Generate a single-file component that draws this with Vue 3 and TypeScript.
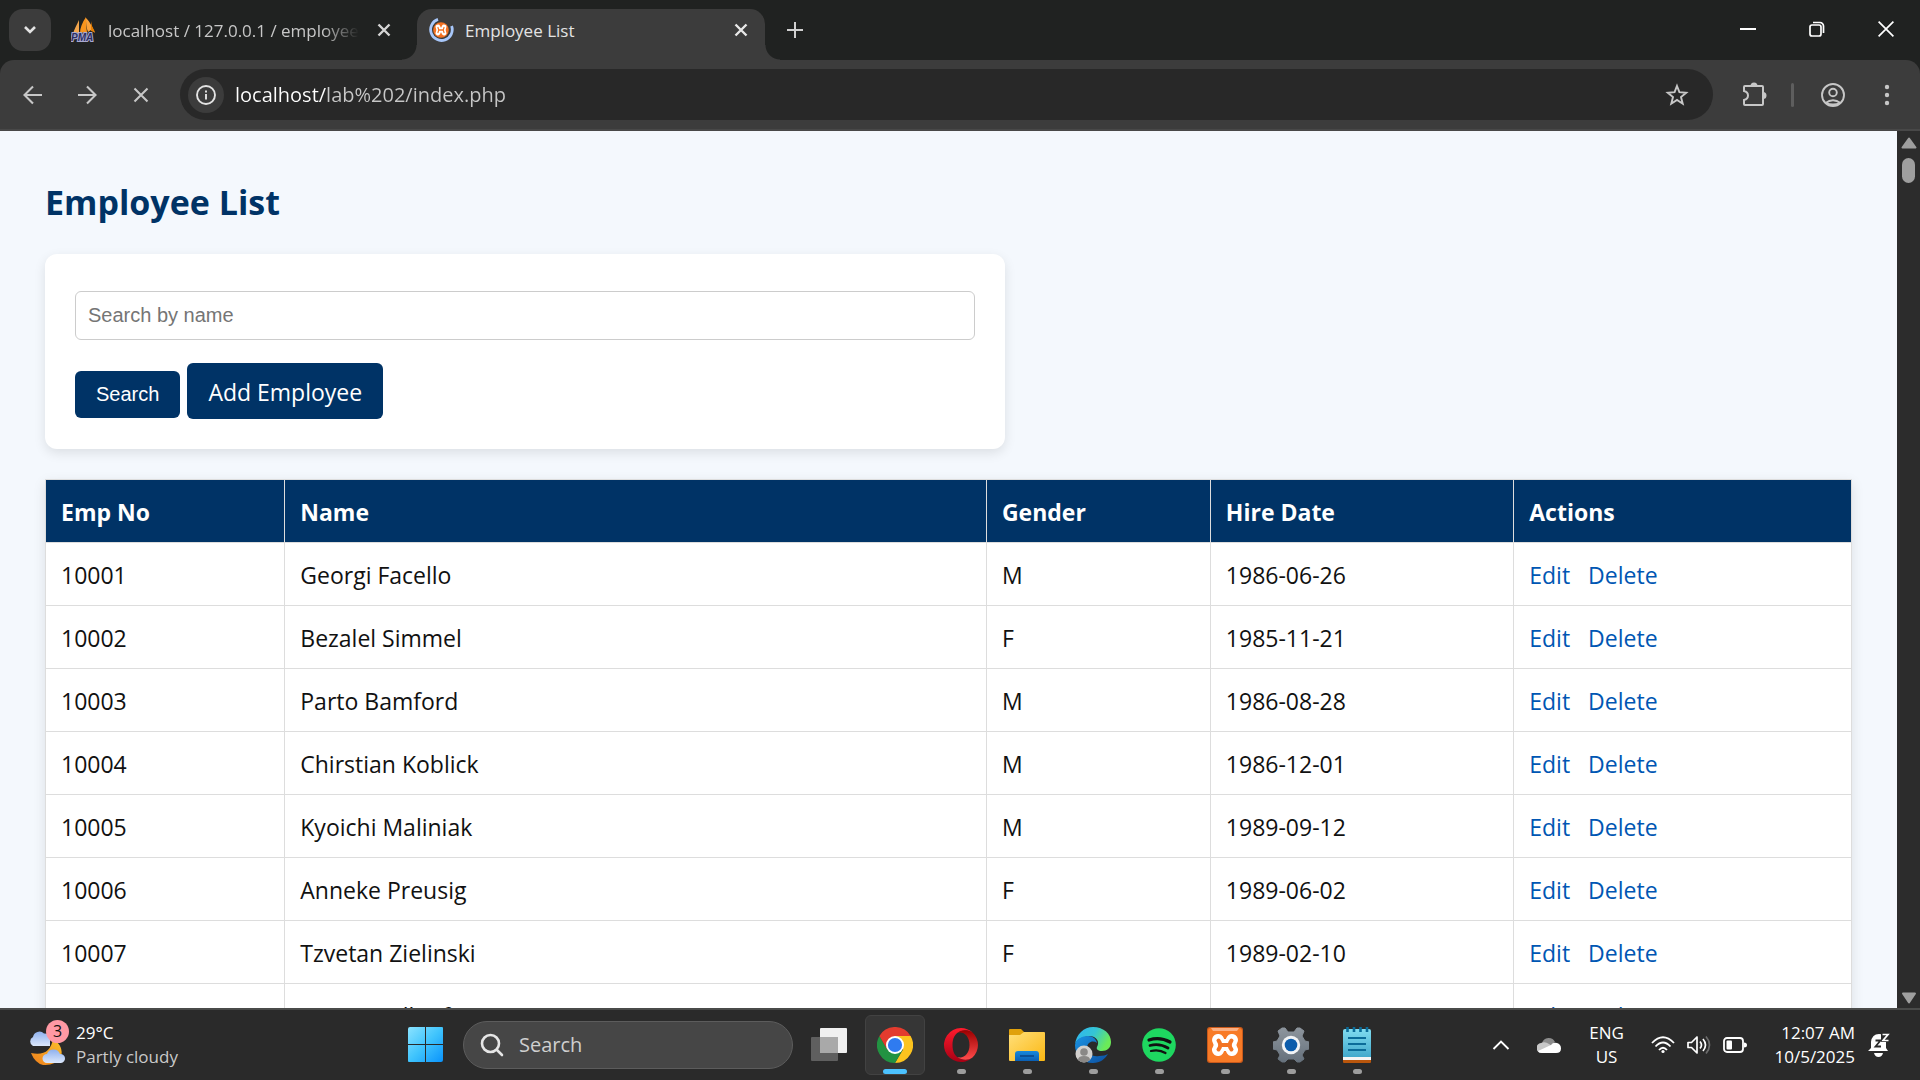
<script setup lang="ts">
import { ref } from 'vue'

interface Employee {
  no: number
  name: string
  gender: 'M' | 'F'
  hired: string
}

const employees: Employee[] = [
  { no: 10001, name: 'Georgi Facello', gender: 'M', hired: '1986-06-26' },
  { no: 10002, name: 'Bezalel Simmel', gender: 'F', hired: '1985-11-21' },
  { no: 10003, name: 'Parto Bamford', gender: 'M', hired: '1986-08-28' },
  { no: 10004, name: 'Chirstian Koblick', gender: 'M', hired: '1986-12-01' },
  { no: 10005, name: 'Kyoichi Maliniak', gender: 'M', hired: '1989-09-12' },
  { no: 10006, name: 'Anneke Preusig', gender: 'F', hired: '1989-06-02' },
  { no: 10007, name: 'Tzvetan Zielinski', gender: 'F', hired: '1989-02-10' },
  { no: 10008, name: 'Saniya Kalloufi', gender: 'M', hired: '1994-09-15' },
]

const columns = ['Emp No', 'Name', 'Gender', 'Hire Date', 'Actions']
const query = ref('')
const address = ref('localhost/lab%202/index.php')
</script>

<template>
  <div class="screen">
    <header class="tabstrip">
      <button class="tab-search" aria-label="Search tabs">
        <svg width="14" height="10" viewBox="0 0 14 10"><path d="M2 2l5 5 5-5" fill="none" stroke="#e3e3e3" stroke-width="2.6" /></svg>
      </button>
      <div class="tab">
        <svg class="favicon" width="26" height="26" viewBox="0 0 26 26">
          <path d="M8 3C6 8 3 12 2 17l6-1z" fill="#f3a64c" />
          <path d="M15 0c-4 6-6 11-6 16l7-1c-1-5-1-10-1-15z" fill="#f7941d" />
          <path d="M15 1c4 4 6 8 9 15l-4-3-3 2c-2-5-2-9-2-14z" fill="#f9a13a" />
          <path d="M20 4l1 5 3 6-4-1z" fill="#e67e00" />
          <text x="0" y="24" font-family="Liberation Sans, sans-serif" font-size="10" font-weight="700" font-style="italic" fill="#2b2d63" stroke="#a9a9cf" stroke-width="2" paint-order="stroke">PMA</text>
        </svg>
        <span class="tab-title fading">localhost / 127.0.0.1 / employee</span>
        <button class="tab-close" aria-label="Close tab">
          <svg width="14" height="14" viewBox="0 0 14 14"><path d="M1.500 1.500l11 11M12.500 1.500l-11 11" stroke="#d5d5d5" stroke-width="2.400" /></svg>
        </button>
      </div>
      <div class="tab active">
        <svg class="favicon" width="26" height="26" viewBox="0 0 26 26">
          <path d="M10 2.400A10.800 10.800 0 1 0 23.600 9" fill="none" stroke="#a8c7fa" stroke-width="2.800" />
          <circle cx="13" cy="13" r="7.800" fill="#f37021" />
          <path d="M10 10Q11.500 13 10 16M16 10Q14.500 13 16 16M11 13H15" fill="none" stroke="#fff" stroke-width="4.800" stroke-linecap="round" />
          <path d="M10 10.500Q11.500 13 10 15.500M16 10.500Q14.500 13 16 15.500M11 13H15" fill="none" stroke="#f37021" stroke-width="1.300" stroke-linecap="round" />
        </svg>
        <span class="tab-title">Employee List</span>
        <button class="tab-close" aria-label="Close tab">
          <svg width="14" height="14" viewBox="0 0 14 14"><path d="M1.500 1.500l11 11M12.500 1.500l-11 11" stroke="#e8e8e8" stroke-width="2.400" /></svg>
        </button>
      </div>
      <button class="new-tab" aria-label="New tab">
        <svg width="16" height="16" viewBox="0 0 16 16"><path d="M8 0v16M0 8h16" stroke="#d0d0d0" stroke-width="2" /></svg>
      </button>
      <div class="window-controls">
        <button aria-label="Minimize"><svg width="16" height="16" viewBox="0 0 16 16"><path d="M0 8h16" stroke="#fff" stroke-width="2" /></svg></button>
        <button aria-label="Restore">
          <svg width="16" height="16" viewBox="0 0 16 16" fill="none" stroke="#fff" stroke-width="1.700"><rect x="1" y="4" width="11" height="11" rx="2" /><path d="M4 1.500h7a3.500 3.500 0 0 1 3.500 3.500v7" /></svg>
        </button>
        <button aria-label="Close"><svg width="16" height="16" viewBox="0 0 16 16"><path d="M.6.600l14.800 14.800M15.400.600L.6 15.400" stroke="#fff" stroke-width="1.700" /></svg></button>
      </div>
    </header>

    <div class="toolbar-back">
      <nav class="toolbar">
        <button class="nav-btn" aria-label="Back"><svg width="20" height="20" viewBox="0 0 20 20"><path d="M19 10H2.500M10 1.500L1.500 10l8.500 8.500" fill="none" stroke="#c7c7c7" stroke-width="2.100" /></svg></button>
        <button class="nav-btn" aria-label="Forward"><svg width="20" height="20" viewBox="0 0 20 20"><path d="M1 10h16.500M10 1.500l8.500 8.500-8.500 8.500" fill="none" stroke="#c7c7c7" stroke-width="2.100" /></svg></button>
        <button class="nav-btn" aria-label="Stop"><svg width="20" height="20" viewBox="0 0 20 20"><path d="M3.500 3.500l13 13M16.500 3.500l-13 13" stroke="#c7c7c7" stroke-width="2.100" /></svg></button>
        <div class="omnibox">
          <button class="site-info" aria-label="Site information">
            <svg width="20" height="20" viewBox="0 0 20 20"><circle cx="10" cy="10" r="9" fill="none" stroke="#e3e3e3" stroke-width="1.900" /><path d="M10 9v5.500M10 5.500v2" stroke="#e3e3e3" stroke-width="1.900" /></svg>
          </button>
          <input v-model="address" class="address" type="text" aria-label="Address" />
          <button class="star" aria-label="Bookmark this tab">
            <svg width="24" height="24" viewBox="0 0 24 24"><path d="M12 3l2.400 6.200 6.800.500-5.200 4.300 1.700 6.700L12 17l-5.700 3.700L8 14 2.800 9.700l6.800-.5z" fill="none" stroke="#c7c7c7" stroke-width="1.900" /></svg>
          </button>
        </div>
        <button class="extensions" aria-label="Extensions">
          <svg width="26" height="26" viewBox="0 0 26 26"><path d="M4 4h17q1 0 1 1v17q0 1-1 1H4q-1 0-1-1v-4q4-1 4-4.500T3 9V5q0-1 1-1z" fill="none" stroke="#c7c7c7" stroke-width="2" /><path d="M9.500 4a3.500 3.500 0 0 1 7 0zM22 10a3.500 3.500 0 0 1 0 7z" fill="#c7c7c7" /></svg>
        </button>
        <span class="divider"></span>
        <button class="profile" aria-label="Profile">
          <svg width="24" height="24" viewBox="0 0 24 24" fill="none" stroke="#c7c7c7" stroke-width="1.900"><circle cx="12" cy="12" r="11" /><circle cx="12" cy="9.500" r="3.800" /><path d="M4.500 20q7.500-5.500 15 0" /><path d="M5 20q7 3 14 0" /></svg>
        </button>
        <button class="menu" aria-label="Menu">
          <svg width="6" height="22" viewBox="0 0 6 22" fill="#c7c7c7"><circle cx="3" cy="3" r="2.200" /><circle cx="3" cy="11" r="2.200" /><circle cx="3" cy="19" r="2.200" /></svg>
        </button>
      </nav>
    </div>

    <div class="viewport">
      <main class="page">
        <h1>Employee List</h1>
        <form class="search-card" @submit.prevent>
          <input v-model="query" type="text" placeholder="Search by name" aria-label="Search by name" />
          <div class="form-actions">
            <button type="submit" class="search-btn">Search</button>
            <a href="#" class="add-btn">Add Employee</a>
          </div>
        </form>
        <table>
          <colgroup><col class="c-no" /><col class="c-name" /><col class="c-gender" /><col class="c-date" /><col class="c-actions" /></colgroup>
          <thead>
            <tr><th v-for="c in columns" :key="c" scope="col">{{ c }}</th></tr>
          </thead>
          <tbody>
            <tr v-for="e in employees" :key="e.no">
              <td>{{ e.no }}</td>
              <td>{{ e.name }}</td>
              <td>{{ e.gender }}</td>
              <td>{{ e.hired }}</td>
              <td><a href="#">Edit</a><a href="#">Delete</a></td>
            </tr>
          </tbody>
        </table>
      </main>
      <div class="scrollbar">
        <svg width="16" height="12" viewBox="0 0 16 12"><path d="M8 1.500L14.500 10.500h-13z" fill="#9f9f9f" stroke="#9f9f9f" stroke-width="2" stroke-linejoin="round" /></svg>
        <span class="thumb"></span>
        <svg class="down" width="16" height="12" viewBox="0 0 16 12"><path d="M8 10.500L14 1.500H2z" fill="#9f9f9f" stroke="#9f9f9f" stroke-width="2" stroke-linejoin="round" /></svg>
      </div>
    </div>

    <footer class="taskbar">
      <button class="weather">
        <span class="weather-icon">
          <svg width="38" height="42" viewBox="0 0 38 42">
            <defs>
              <linearGradient id="cloud" x1="0" y1="0" x2="0" y2="1"><stop offset="0" stop-color="#8fb1ee" /><stop offset="1" stop-color="#dce8fc" /></linearGradient>
              <linearGradient id="moon" x1="1" y1="0" x2="0" y2="1"><stop offset="0" stop-color="#fcc12c" /><stop offset="1" stop-color="#ee7e1c" /></linearGradient>
            </defs>
            <path d="M25 15Q36 22 33 33Q27 42 15 41Q7 39 3 29Q22 33 25 15z" fill="url(#moon)" />
            <path d="M5 22a5 5 0 0 1 0-9 6.500 6.500 0 0 1 11-3.500A6 6 0 0 1 22 13v9z" fill="url(#cloud)" />
            <path d="M19 39a4.500 4.500 0 0 1 0-9 7 7 0 0 1 13 0 4.500 4.500 0 0 1 1 9z" fill="url(#cloud)" />
          </svg>
          <span class="badge">3</span>
        </span>
        <span class="weather-text"><span class="temp">29°C</span><span class="cond">Partly cloudy</span></span>
      </button>

      <div class="apps">
        <button class="start" aria-label="Start">
          <svg width="36" height="36" viewBox="0 0 36 36">
            <defs><linearGradient id="win" x1="0" y1="0" x2="1" y2="1"><stop offset="0" stop-color="#8be3ff" /><stop offset=".5" stop-color="#40c4fd" /><stop offset="1" stop-color="#0a93fb" /></linearGradient></defs>
            <path d="M2 0h15v17H0V2q0-2 2-2zM18 0h16q1 0 1 1v16H18zM0 18h17v17H1q-1 0-1-1zM18 18h17v15q0 2-2 2H18z" fill="url(#win)" />
          </svg>
        </button>
        <label class="task-search">
          <svg width="24" height="24" viewBox="0 0 24 24" fill="none" stroke="#e6e6e6" stroke-width="2.600" stroke-linecap="round"><circle cx="10.500" cy="10.500" r="8.500" /><path d="M17 17l5 5" /></svg>
          <input type="text" placeholder="Search" aria-label="Search Windows" />
        </label>
        <button class="task-view" aria-label="Task view">
          <svg width="36" height="36" viewBox="0 0 36 36">
            <rect x="9" y="1" width="27" height="25" rx="1" fill="#f0f0f0" /><rect y="10" width="27" height="24" rx="1" fill="#5f5f5f" /><path d="M9 10h18v16H9z" fill="#a9a9a9" />
          </svg>
        </button>
        <button class="app current" aria-label="Chrome">
          <svg width="36" height="36" viewBox="0 0 36 36">
            <path d="M18 18L2.400 9A18 18 0 0 1 33.600 9z" fill="#e33b2e" />
            <path d="M18 9h15.600A18 18 0 0 1 18 36l8-13.500z" fill="#fcc31e" />
            <path d="M2.400 9A18 18 0 0 0 18 36l7.800-13.500L10.200 22.500z" fill="#229342" />
            <path d="M2.400 9h31.200H18L10.200 22.500z" fill="#e33b2e" />
            <circle cx="18" cy="18" r="9" fill="#fff" /><circle cx="18" cy="18" r="7.100" fill="#2f7bf0" />
          </svg>
          <span class="indicator"></span>
        </button>
        <button class="app" aria-label="Opera">
          <svg width="36" height="36" viewBox="0 0 36 36">
            <defs>
              <linearGradient id="opA" x1="0" y1="0" x2="0" y2="1"><stop offset="0" stop-color="#ff1b2d" /><stop offset="1" stop-color="#a70014" /></linearGradient>
              <linearGradient id="opB" x1="0" y1="0" x2="0" y2="1"><stop offset="0" stop-color="#9c0000" /><stop offset="1" stop-color="#ff4b4b" /></linearGradient>
            </defs>
            <path d="M18 1a17 17 0 1 0 11.500 29.500C26 33 21 33 18 32c-6-2-8.500-7-8.500-14S12 6 18 4c3-1 8-1 11.500 1.500A17 17 0 0 0 18 1z" fill="url(#opA)" />
            <path d="M29.500 5.500C24 2 18 3 14.500 6c6-2 12 3 12 12s-6 14-12 12c4 3 10 4 15 .500A17 17 0 0 0 29.500 5.500z" fill="url(#opB)" />
          </svg>
          <span class="indicator"></span>
        </button>
        <button class="app" aria-label="File Explorer">
          <svg width="36" height="36" viewBox="0 0 36 36">
            <defs>
              <linearGradient id="fold" x1="0" y1="0" x2="1" y2="1"><stop offset="0" stop-color="#ffdf7a" /><stop offset="1" stop-color="#fbb813" /></linearGradient>
              <linearGradient id="foldB" x1="0" y1="0" x2="0" y2="1"><stop offset="0" stop-color="#1789dc" /><stop offset="1" stop-color="#0a5fb4" /></linearGradient>
            </defs>
            <path d="M0 3q0-1 1-1h11l4 4v6H0z" fill="#e0a10c" /><path d="M0 8h11l4-3h20q1 0 1 1v27q0 1-1 1H1q-1 0-1-1z" fill="url(#fold)" />
            <path d="M6 34V27q0-3 3-3h18q3 0 3 3v7z" fill="url(#foldB)" /><path d="M11 29h14" stroke="#0b4f94" stroke-width="2" />
          </svg>
          <span class="indicator"></span>
        </button>
        <button class="app" aria-label="Edge">
          <svg width="36" height="36" viewBox="0 0 36 36">
            <defs>
              <linearGradient id="edA" x1="0" y1="0" x2="1" y2=".4"><stop offset="0" stop-color="#2eb4f4" /><stop offset=".55" stop-color="#35c5d4" /><stop offset="1" stop-color="#6bea58" /></linearGradient>
              <linearGradient id="edB" x1="0" y1="0" x2="1" y2="1"><stop offset="0" stop-color="#1a93e4" /><stop offset="1" stop-color="#0c4fa0" /></linearGradient>
            </defs>
            <path d="M0 18C1 7 9 0 18 0c11 0 18 7 18 15 0 6-4 9-9 9-4 0-6-2-5-4 3-5 0-11-8-11C6 10 1 13 0 18z" fill="url(#edA)" />
            <path d="M0 18C1 12 7 9 13 9c5 0 8 3 9 7-4-3-10-1-10 5 0 6 6 9 12 8 4 0 7-1 9-2-3 5-8 9-15 9C7 36 0 28 0 18z" fill="url(#edB)" />
            <circle cx="9" cy="27" r="8.500" fill="#d2d0ce" /><circle cx="9" cy="25" r="3.800" fill="#8a8886" /><path d="M3 33q0-4 6-4t6 4q-6 5-12 0z" fill="#8a8886" />
          </svg>
          <span class="indicator"></span>
        </button>
        <button class="app" aria-label="Spotify">
          <svg width="36" height="36" viewBox="0 0 36 36"><circle cx="18" cy="18" r="16.800" fill="#1ed760" /><path d="M8 13q11-3.500 21 2" fill="none" stroke="#111" stroke-width="3.200" stroke-linecap="round" /><path d="M9 18.500q9.500-2.500 18 2.500" fill="none" stroke="#111" stroke-width="2.800" stroke-linecap="round" /><path d="M10 24q8-2 14.500 2" fill="none" stroke="#111" stroke-width="2.200" stroke-linecap="round" /></svg>
          <span class="indicator"></span>
        </button>
        <button class="app" aria-label="XAMPP">
          <svg width="36" height="36" viewBox="0 0 36 36">
            <rect width="36" height="36" rx="3" fill="#c9591b" /><rect x="1" y="1" width="34" height="34" rx="3" fill="#f87b27" /><path d="M4 1h28l-2 3H6z" fill="#fbb083" />
            <path d="M11 13Q14.500 18 11 23M25 13Q21.500 18 25 23M13 18H23" fill="none" stroke="#fff" stroke-width="12" stroke-linecap="round" />
            <path d="M11.500 13.500Q15 18 11.500 22.500M24.500 13.500Q21 18 24.500 22.500M14 18H22" fill="none" stroke="#f37424" stroke-width="4" stroke-linecap="round" />
            <path d="M18 5v7M18 24v7" stroke="#f87b27" stroke-width="2" />
          </svg>
          <span class="indicator"></span>
        </button>
        <button class="app" aria-label="Settings">
          <svg width="36" height="36" viewBox="0 0 36 36">
            <defs><linearGradient id="gear" x1="0" y1="0" x2="0" y2="1"><stop offset="0" stop-color="#8d959d" /><stop offset="1" stop-color="#66717c" /></linearGradient></defs>
            <path d="M9 1h3l3 4h6l3-4h3l4 3-2 5 3 5 4 1v7l-4 1-3 5 2 4-4 3h-3l-3-3h-6l-3 3H9l-4-3 2-4-3-5-4-1v-7l4-1 3-5-2-5z" fill="url(#gear)" stroke="url(#gear)" stroke-linejoin="round" />
            <circle cx="18" cy="18" r="9.200" fill="#f1f3f5" /><circle cx="18" cy="18" r="6.300" fill="#0c5cab" />
          </svg>
          <span class="indicator"></span>
        </button>
        <button class="app" aria-label="Notepad">
          <svg width="36" height="36" viewBox="0 0 36 36">
            <defs><linearGradient id="note" x1="0" y1="0" x2="0" y2="1"><stop offset="0" stop-color="#80dcf0" /><stop offset="1" stop-color="#42a9cc" /></linearGradient></defs>
            <path d="M4 31h28v4q0 1-1 1H5q-1 0-1-1z" fill="#b9560c" /><path d="M4 28h28v5H4z" fill="#f4f4f4" /><path d="M4 4q0-2 2-2h24q2 0 2 2v26H4z" fill="url(#note)" />
            <path d="M9 11h18M9 17h18M9 23h18" stroke="#0b6c99" stroke-width="2" /><path d="M8.500 0v5M15 0v5M21.500 0v5M28 0v5" stroke="#0b6c99" stroke-width="2.600" />
          </svg>
          <span class="indicator"></span>
        </button>
      </div>

      <div class="tray">
        <button class="tray-btn caret" aria-label="Show hidden icons"><svg width="18" height="12" viewBox="0 0 18 12"><path d="M1.500 10L9 2.500l7.500 7.500" fill="none" stroke="#fff" stroke-width="1.900" /></svg></button>
        <button class="tray-btn onedrive" aria-label="OneDrive"><svg width="24" height="16" viewBox="0 0 24 16"><path d="M5 6a7 7 0 0 1 13-1l-6 6z" fill="#8d8d8d" /><path d="M5 16a5 5 0 0 1-1-10q4-2 8 1l6 4-7 5z" fill="#c8c8c8" /><path d="M5 16q-3 0-4-2l13-6q2-3 6-2 4 1 4 5.500T19 16z" fill="#fff" /></svg></button>
        <button class="lang"><span>ENG</span><span>US</span></button>
        <button class="status" aria-label="Network, volume and battery">
          <svg width="24" height="18" viewBox="0 0 24 18" fill="none" stroke="#fff" stroke-width="1.800"><path d="M1 7q11-11.500 22 0M4.500 10.500q7.500-8 15 0M8 14q4-4.500 8 0" /><circle cx="12" cy="15.500" r="1.600" fill="#fff" stroke="none" /></svg>
          <svg width="24" height="20" viewBox="0 0 24 20" fill="none" stroke="#fff" stroke-width="1.700"><path d="M1 7.500h3.500L10 2v16l-5.500-5.500H1z" stroke-linejoin="round" /><path d="M13 6.500q3 3.500 0 7M16 4q5 6 0 12" /><path d="M19 1.500q7 8.500 0 17" stroke="#6c6c6c" /></svg>
          <svg width="24" height="16" viewBox="0 0 24 16"><rect x="1" y="1" width="19" height="14" rx="3" fill="none" stroke="#fff" stroke-width="1.800" /><rect x="3.500" y="3.500" width="5.500" height="9" rx="1" fill="#fff" /><path d="M21 5.500q3 0 3 2.500t-3 2.500z" fill="#fff" /></svg>
        </button>
        <button class="clock"><span>12:07 AM</span><span>10/5/2025</span></button>
        <button class="tray-btn bell" aria-label="Notifications">
          <svg width="22" height="24" viewBox="0 0 22 24"><path d="M3 15V9q1-8 8-8 5 0 7 5v9l2 3H0z" fill="#fff" /><path d="M6 20h9q-1 4-4.500 4T6 20z" fill="#fff" /><path d="M13 0h9v9h-9z" fill="#2a2a2a" /><path d="M14.500 1.500h5.500l-5 6h5.500" fill="none" stroke="#fff" stroke-width="1.700" /><path d="M7.500 7.500h5l-5 6h5.500" fill="none" stroke="#2a2a2a" stroke-width="1.800" /></svg>
        </button>
      </div>
    </footer>
  </div>
</template>

<style>
body {
  margin: 0;
  background: #2a2a2a;
}
</style>

<style scoped>
.screen {
  display: flex;
  flex-direction: column;
  height: 100vh;
  overflow: hidden;
  font-family: "Open Sans", "Noto Sans", sans-serif;
  background: #f4f8fd;
}
* {
  box-sizing: border-box;
}
button {
  display: flex;
  align-items: center;
  justify-content: center;
  flex: none;
  padding: 0;
  border: 0;
  background: none;
  color: inherit;
  font-family: inherit;
}
svg {
  display: block;
  flex: none;
}

/* tab strip */
.tabstrip {
  display: flex;
  align-items: flex-end;
  height: 60px;
  flex: none;
  background: #202221;
}
.tab-search {
  width: 42px;
  height: 42px;
  margin: 0 6px 9px 9px;
  border-radius: 14px;
  background: #3c3c3c;
}
.tab {
  display: flex;
  align-items: center;
  height: 51px;
  width: 360px;
  padding: 0 26px 9px 14px;
  color: #c7c7c7;
}
.tab .favicon {
  margin-right: 11px;
}
.tab.active {
  position: relative;
  width: 348px;
  padding: 0 17px 9px 11px;
  border-radius: 15px 15px 0 0;
  background: #3c3c3c;
  color: #e3e3e3;
}
.tab.active::before,
.tab.active::after {
  content: "";
  position: absolute;
  bottom: 0;
  width: 15px;
  height: 15px;
}
.tab.active::before {
  right: 100%;
  background: radial-gradient(circle at 0 0, transparent 14px, #3c3c3c 15px);
}
.tab.active::after {
  left: 100%;
  background: radial-gradient(circle at 100% 0, transparent 14px, #3c3c3c 15px);
}
.tab-title {
  flex: 1;
  min-width: 0;
  padding-top: 2px;
  overflow: hidden;
  white-space: nowrap;
  font-size: 17px;
  line-height: 26px;
}
.fading {
  mask-image: linear-gradient(90deg, #000 calc(100% - 36px), transparent);
}
.tab-close {
  width: 14px;
  height: 14px;
  margin-left: 18px;
}
.new-tab {
  width: 42px;
  height: 42px;
  margin: 0 0 9px 9px;
}
.window-controls {
  display: flex;
  margin-left: auto;
  height: 60px;
}
.window-controls button {
  width: 69px;
  height: 58px;
}

/* toolbar */
.toolbar-back {
  flex: none;
  background: #202221;
}
.toolbar {
  display: flex;
  align-items: center;
  height: 71px;
  padding: 0 18px 0 6px;
  border-bottom: 2px solid #484848;
  border-radius: 14px 14px 0 0;
  background: #3c3c3c;
}
.nav-btn {
  width: 54px;
  height: 51px;
}
.omnibox {
  display: flex;
  align-items: center;
  flex: 1;
  height: 51px;
  margin-left: 12px;
  padding: 0 18px 0 8px;
  border-radius: 26px;
  background: #282828;
}
.site-info {
  width: 36px;
  height: 36px;
  border-radius: 18px;
  background: #3c3c3c;
}
.address {
  flex: 1;
  min-width: 0;
  margin: 0 12px 0 11px;
  padding: 0;
  border: 0;
  outline: 0;
  font: 20px/30px "Open Sans", "Noto Sans", sans-serif;
  color: transparent;
  background: linear-gradient(90deg, #fff 91px, #c7c7c7 91px) text;
}
.star {
  width: 36px;
  height: 36px;
}
.extensions {
  width: 36px;
  height: 36px;
  margin-left: 23px;
}
.divider {
  width: 3px;
  height: 24px;
  margin: 0 27px 0 19px;
  border-radius: 2px;
  background: #5e5e5e;
}
.menu {
  width: 30px;
  height: 36px;
  margin-left: 27px;
}

/* page */
.viewport {
  display: flex;
  flex: 1;
  min-height: 0;
  overflow: hidden;
}
.page {
  flex: 1;
  min-width: 0;
  padding: 46px 45px 45px;
  color: #111;
}
h1 {
  margin: 0 0 27px;
  color: #036;
  font-size: 34px;
  line-height: 50px;
  font-weight: 700;
}
.search-card {
  max-width: 960px;
  padding: 37px 30px 30px;
  border-radius: 12px;
  background: #fff;
  box-shadow: 0 4px 12px rgba(0, 0, 0, 0.1);
}
.search-card input {
  display: block;
  width: 100%;
  height: 49px;
  padding: 0 12px;
  border: 1px solid #ccc;
  border-radius: 6px;
  outline: 0;
  background: #fff;
  font: 20px "Liberation Sans", Arial, sans-serif;
}
.search-card input::placeholder {
  color: #757575;
}
.form-actions {
  display: flex;
  align-items: baseline;
  gap: 7px;
  height: 56px;
  margin-top: 23px;
}
.search-btn,
.add-btn {
  border-radius: 6px;
  background: #036;
  color: #fff;
}
.search-btn {
  height: 47px;
  padding: 0 21px;
  font: 20px "Liberation Sans", Arial, sans-serif;
}
.add-btn {
  padding: 2px 21px 0;
  font-size: 23px;
  line-height: 54px;
  text-decoration: none;
}
table {
  width: 100%;
  margin-top: 30px;
  border-collapse: collapse;
  table-layout: fixed;
  background: #fff;
  box-shadow: 0 4px 12px rgba(0, 0, 0, 0.1);
}
.c-no {
  width: 13.25%;
}
.c-name {
  width: 38.85%;
}
.c-gender {
  width: 12.4%;
}
.c-date {
  width: 16.8%;
}
th,
td {
  height: 63px;
  padding: 1px 15px 0;
  border: 1px solid #ddd;
  text-align: left;
  font-size: 23px;
  line-height: 36px;
}
th {
  background: #036;
  color: #fff;
  font-weight: 700;
}
td a {
  margin-right: 18px;
  color: #0056b3;
  text-decoration: none;
}
.scrollbar {
  display: flex;
  flex-direction: column;
  align-items: center;
  flex: none;
  width: 23px;
  padding: 6px 0 4px;
  background: #2c2c2c;
}
.thumb {
  width: 13px;
  height: 25px;
  margin-top: 9px;
  border-radius: 7px;
  background: #9f9f9f;
}
.down {
  margin-top: auto;
}

/* taskbar */
.taskbar {
  display: flex;
  align-items: center;
  flex: none;
  height: 72px;
  padding-bottom: 1px;
  border-top: 2px solid #4a4b4a;
  background: #2a2a2a;
  color: #fff;
}
.weather {
  justify-content: flex-start;
  flex: 0 1 408px;
  gap: 10px;
  padding-left: 28px;
  text-align: left;
}
.weather-icon {
  position: relative;
}
.badge {
  position: absolute;
  top: -4px;
  right: -3px;
  width: 23px;
  height: 23px;
  border-radius: 12px;
  background: #ff99a4;
  color: #111;
  font-size: 16px;
  line-height: 23px;
  text-align: center;
}
.weather-text,
.lang,
.clock {
  display: flex;
  flex-direction: column;
  font-size: 17px;
  line-height: 24px;
}
.cond {
  color: #c9c9c9;
}
.apps {
  display: flex;
  align-items: center;
  flex: none;
}
.start {
  width: 36px;
  height: 48px;
}
.task-search {
  display: flex;
  align-items: center;
  width: 330px;
  height: 48px;
  margin: 0 18px 0 19px;
  padding-left: 16px;
  gap: 15px;
  border: 1px solid #5c5c5c;
  border-radius: 24px;
  background: #464646;
}
.task-search input {
  flex: 1;
  min-width: 0;
  padding: 0;
  border: 0;
  outline: 0;
  background: none;
  color: #fff;
  font: 20px/30px "Open Sans", "Noto Sans", sans-serif;
}
.task-search input::placeholder {
  color: #cfcfcf;
}
.task-view {
  width: 36px;
  height: 48px;
  margin-right: 18px;
}
.app {
  flex-direction: column;
  justify-content: flex-end;
  gap: 6px;
  width: 60px;
  height: 60px;
  margin-right: 6px;
  border: 1px solid transparent;
  border-radius: 6px;
}
.app.current {
  border-color: #424242;
  background: #363636;
}
.indicator {
  width: 9px;
  height: 5px;
  border-radius: 3px;
  background: #9d9d9d;
}
.current .indicator {
  width: 24px;
  background: #4cc2ff;
}
.tray {
  display: flex;
  align-items: center;
  margin-left: auto;
  padding-right: 30px;
}
.onedrive {
  margin: 0 26px 0 27px;
}
.lang {
  width: 39px;
}
.status {
  gap: 12px;
  margin: 0 22px 0 25px;
}
.clock {
  align-items: flex-end;
  width: 86px;
}
.bell {
  margin-left: 13px;
}
</style>
